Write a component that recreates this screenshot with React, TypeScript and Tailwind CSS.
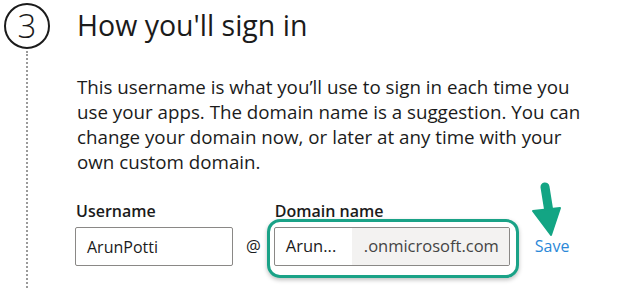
const font = { fontFamily: '"Open Sans", "Noto Sans", sans-serif' };

const StepMarker = () => (
  <div className="flex w-[54px] flex-col items-center pt-[3px]">
    <div className="flex h-[46px] w-[46px] items-center justify-center rounded-full border-2 border-[#1b1b1b] pb-[1px] text-[33px] font-light leading-none text-[#1b1b1b]">
      3
    </div>
    <div className="mt-[2px] flex-1 border-l-2 border-dotted border-[#9a9a9a]" />
  </div>
);

const SaveArrow = () => (
  <svg className="absolute left-[530px] top-[182px]" width="36" height="56" viewBox="0 0 36 56">
    <path d="M15 5 L19 30" stroke="#13a584" strokeWidth="9" strokeLinecap="round" fill="none" />
    <path d="M3 29 L30 26 L21 53 Z" fill="#13a584" stroke="#13a584" strokeWidth="2" strokeLinejoin="round" />
  </svg>
);

export default function App() {
  return (
    <div className="relative flex h-[288px] w-[624px] overflow-hidden bg-white text-[#1b1b1b]" style={font}>
      <StepMarker />
      <div className="ml-[23px] flex flex-col">
        <h1 className="mt-[6px] text-[28.5px] font-normal leading-[38px]">How you'll sign in</h1>
        <p className="mt-[30px] text-[18.75px] leading-[25px]">
          This username is what you’ll use to sign in each time you
          <br />
          use your apps. The domain name is a suggestion. You can
          <br />
          change your domain now, or later at any time with your
          <br />
          own custom domain.
        </p>
        <div className="-ml-[2px] mt-[26px] flex items-end">
          <div className="flex flex-col">
            <label className="pl-[1px] text-[16px] font-semibold leading-[22px]">Username</label>
            <div className="mt-[5px] flex h-[39px] w-[158px] items-center rounded-[2px] border border-[#8a8886] pl-[11px] text-[16px]">
              ArunPotti
            </div>
          </div>
          <span className="mx-[13px] flex h-[39px] items-center text-[16.5px]">@</span>
          <div className="relative flex flex-col">
            <label className="pl-[1px] text-[16px] font-semibold leading-[22px]">Domain name</label>
            <div className="mt-[5px] flex h-[39px] w-[236px] overflow-hidden rounded-[2px] border border-[#8a8886] text-[16.5px]">
              <div className="flex w-[77px] items-center pl-[11px]">Arun...</div>
              <div className="flex flex-1 items-center bg-[#f3f2f1] pl-[12px] text-[#444]">.onmicrosoft.com</div>
            </div>
            <div className="pointer-events-none absolute -left-[7px] -right-[9px] bottom-[-12px] h-[59px] rounded-[13px] border-[3px] border-[#1aa287] shadow-[0_2px_4px_rgba(0,0,0,0.25)]" />
          </div>
          <span className="ml-[25px] flex h-[39px] items-center pb-[1px] text-[16px] text-[#2b88d8]">Save</span>
        </div>
      </div>
      <SaveArrow />
    </div>
  );
}
